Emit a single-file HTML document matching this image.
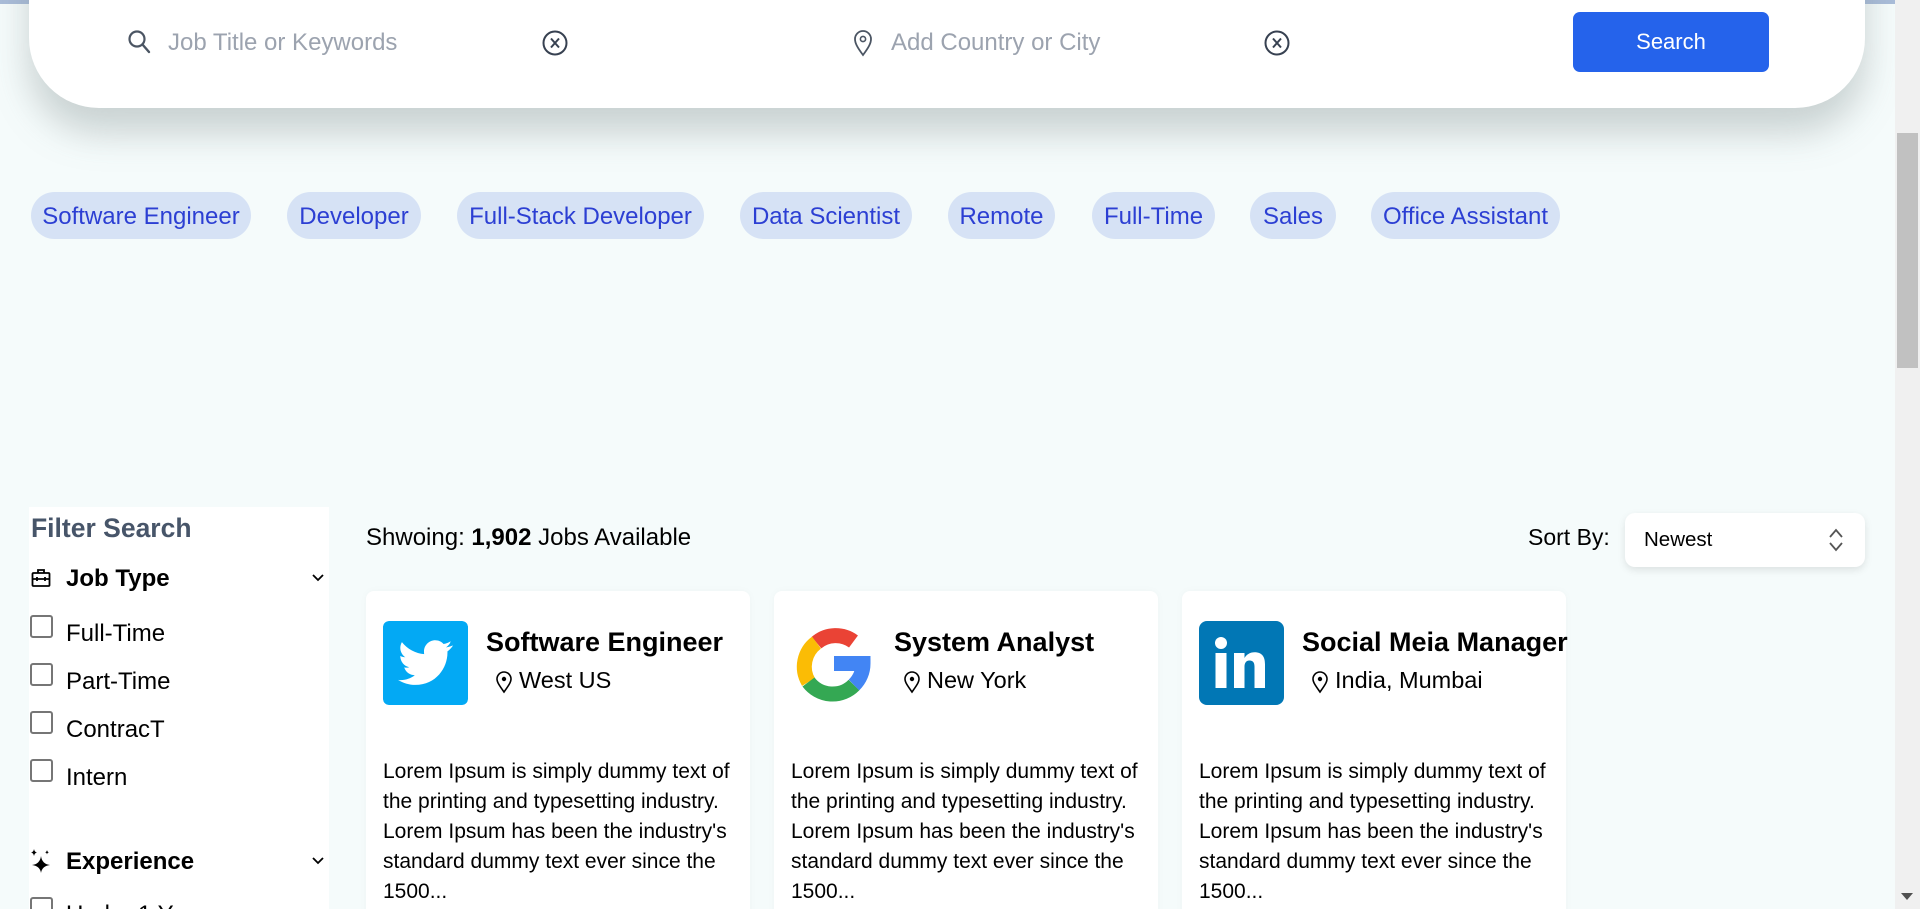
<!DOCTYPE html>
<html><head><meta charset="utf-8">
<style>
*{box-sizing:border-box;margin:0;padding:0}
html,body{width:1920px;height:909px;overflow:hidden}
body{background:#f5fbfb;font-family:"Liberation Sans",sans-serif;position:relative}
.abs{position:absolute}
.topline{left:0;top:0;width:1895px;height:4px;background:#a9bcd9}
.bar{left:29px;top:-60px;width:1836px;height:168px;background:#fff;border-radius:0 0 70px 70px;box-shadow:0 25px 35px rgba(120,135,135,.35)}
.ph{font-size:24px;color:#9ca3af;top:29px}
.btn{left:1573px;top:12px;width:196px;height:60px;background:#2563eb;border-radius:7px;color:#fff;font-size:22px;text-align:center;line-height:60px}
.chip{top:192px;height:47px;background:#d6e2f5;border-radius:24px;color:#2c3fd3;font-size:24px;line-height:49px;text-align:center;white-space:nowrap}
.sb{left:1895px;top:0;width:25px;height:909px;background:#f0f0f0}
.thumb{left:1897px;top:133px;width:21px;height:235px;background:#c1c1c1}
.side{left:29px;top:507px;width:300px;height:420px;background:#fff}
.fs{left:31px;top:513px;font-size:26.5px;font-weight:bold;color:#475569}
.h{font-size:24px;font-weight:bold;color:#000}
.cb{left:30px;width:23px;height:23px;border:2px solid #767676;border-radius:3px;background:#fff}
.ct{left:66px;font-size:24px;color:#000}
.card{top:591px;width:384px;height:340px;background:#fff;border-radius:8px;box-shadow:0 0 8px rgba(0,0,0,.03)}
.title{left:120px;top:36px;font-size:27px;font-weight:bold;color:#000;white-space:nowrap}
.loc{left:153px;top:76px;font-size:23.5px;color:#000;white-space:nowrap}
.pin{left:129px;top:79px}
.desc{left:17px;top:166px;width:365px;font-size:21px;line-height:30px;color:#000}
.logo{left:17px;top:30px;width:85px;height:84px;border-radius:6px}
</style></head><body>
<div class="abs topline"></div>
<div class="abs bar"></div>
<svg class="abs" style="left:127px;top:29px" width="24" height="26" viewBox="0 0 24 26"><circle cx="10" cy="10" r="7.5" fill="none" stroke="#4b5563" stroke-width="2.2"/><path d="M15.5 15.5L22 23" stroke="#4b5563" stroke-width="2.4" stroke-linecap="round"/></svg>
<div class="abs ph" style="left:168px">Job Title or Keywords</div>
<svg class="abs" style="left:541px;top:29px" width="28" height="28" viewBox="0 0 28 28"><circle cx="14" cy="14" r="11.5" fill="none" stroke="#374151" stroke-width="2"/><path d="M10 9.5L18 18.5M18 9.5L10 18.5" stroke="#374151" stroke-width="2"/></svg>
<svg class="abs" style="left:852px;top:29px" width="22" height="28" viewBox="0 0 22 28"><path d="M11 26C5 18 3 14 3 10a8 8 0 0 1 16 0c0 4-2 8-8 16z" fill="none" stroke="#4b5563" stroke-width="1.8"/><circle cx="11" cy="10" r="2.6" fill="none" stroke="#4b5563" stroke-width="1.6"/></svg>
<div class="abs ph" style="left:891px">Add Country or City</div>
<svg class="abs" style="left:1263px;top:29px" width="28" height="28" viewBox="0 0 28 28"><circle cx="14" cy="14" r="11.5" fill="none" stroke="#374151" stroke-width="2"/><path d="M10 9.5L18 18.5M18 9.5L10 18.5" stroke="#374151" stroke-width="2"/></svg>
<div class="abs btn">Search</div>

<div class="abs chip" style="left:31px;width:220px">Software Engineer</div>
<div class="abs chip" style="left:287px;width:134px">Developer</div>
<div class="abs chip" style="left:457px;width:247px">Full-Stack Developer</div>
<div class="abs chip" style="left:740px;width:172px">Data Scientist</div>
<div class="abs chip" style="left:948px;width:107px">Remote</div>
<div class="abs chip" style="left:1092px;width:123px">Full-Time</div>
<div class="abs chip" style="left:1250px;width:86px">Sales</div>
<div class="abs chip" style="left:1371px;width:189px">Office Assistant</div>

<div class="abs sb"></div>
<div class="abs thumb"></div>
<svg class="abs" style="left:1899px;top:891px" width="16" height="10"><path d="M2 2h12L8 9z" fill="#505050"/></svg>

<div class="abs side"></div>
<div class="abs fs">Filter Search</div>
<svg class="abs" style="left:31px;top:568px" width="20" height="20" viewBox="0 0 20 20" fill="none" stroke="#000" stroke-width="1.8"><rect x="1.5" y="5" width="17" height="13" rx="1"/><path d="M7 5V2h6v3M1.5 11h17M6 9v4M14 9v4"/></svg>
<div class="abs h" style="left:66px;top:565px">Job Type</div>
<svg class="abs" style="left:311px;top:572px" width="14" height="12"><path d="M2 3l5 5 5-5" fill="none" stroke="#000" stroke-width="1.8"/></svg>
<div class="abs cb" style="top:615px"></div><div class="abs ct" style="top:620px">Full-Time</div>
<div class="abs cb" style="top:663px"></div><div class="abs ct" style="top:668px">Part-Time</div>
<div class="abs cb" style="top:711px"></div><div class="abs ct" style="top:716px">ContracT</div>
<div class="abs cb" style="top:759px"></div><div class="abs ct" style="top:764px">Intern</div>
<svg class="abs" style="left:30px;top:849px" width="22" height="24" viewBox="0 0 22 24"><path d="M11 7Q12 15 20 16Q12 17 11 24Q10 17 2 16Q10 15 11 7z" fill="#000"/><path d="M4 0Q4.5 3 7 3.5Q4.5 4 4 7Q3.5 4 1 3.5Q3.5 3 4 0z" fill="#000"/><path d="M17 1Q17.3 3 19 3.3Q17.3 3.6 17 5.5Q16.7 3.6 15 3.3Q16.7 3 17 1z" fill="#000"/></svg>
<div class="abs h" style="left:66px;top:848px">Experience</div>
<svg class="abs" style="left:311px;top:855px" width="14" height="12"><path d="M2 3l5 5 5-5" fill="none" stroke="#000" stroke-width="1.8"/></svg>
<div class="abs cb" style="top:897px"></div><div class="abs ct" style="top:901px">Under 1 Year</div>

<div class="abs" style="left:366px;top:524px;font-size:24px;color:#000">Shwoing: <b>1,902</b> Jobs Available</div>
<div class="abs" style="left:1528px;top:524px;font-size:23px;color:#000">Sort By:</div>
<div class="abs" style="left:1625px;top:513px;width:240px;height:54px;background:#fff;border-radius:10px;box-shadow:0 3px 8px rgba(0,0,0,.1)"></div>
<div class="abs" style="left:1644px;top:528px;font-size:20.5px;color:#000">Newest</div>
<svg class="abs" style="left:1827px;top:527px" width="18" height="26" viewBox="0 0 18 26"><path d="M3 10l6-7 6 7M3 16l6 7 6-7" fill="none" stroke="#555" stroke-width="1.8"/></svg>

<div class="abs card" style="left:366px">
 <svg class="abs logo" viewBox="0 0 85 84"><rect width="85" height="84" rx="6" fill="#03a9f4"/><g transform="translate(15,14) scale(2.3)"><path fill="#fff" d="M23.6 4.6c-.9.4-1.8.6-2.8.8 1-.6 1.8-1.6 2.1-2.7-.9.6-2 1-3.1 1.2-.9-1-2.2-1.6-3.6-1.6-2.7 0-4.9 2.2-4.9 4.9 0 .4 0 .8.1 1.1C7.7 8.1 4.1 6.1 1.7 3.1c-.4.7-.7 1.6-.7 2.5 0 1.7.9 3.2 2.2 4.1-.8 0-1.6-.2-2.2-.6v.1c0 2.4 1.7 4.4 3.9 4.8-.4.1-.8.2-1.3.2-.3 0-.6 0-.9-.1.6 2 2.4 3.4 4.6 3.4-1.7 1.3-3.8 2.1-6.1 2.1-.4 0-.8 0-1.2-.1 2.2 1.4 4.8 2.2 7.5 2.2 9.1 0 14-7.5 14-14v-.6c1-.7 1.8-1.6 2.4-2.5z"/></g></svg>
 <div class="abs title">Software Engineer</div>
 <svg class="abs pin" width="18" height="24" viewBox="0 0 18 24"><path d="M9 22C4 15 2 12 2 9a7 7 0 0 1 14 0c0 3-2 6-7 13z" fill="none" stroke="#000" stroke-width="1.6"/><circle cx="9" cy="9" r="2.2" fill="#000"/></svg>
 <div class="abs loc">West US</div>
 <div class="abs desc">Lorem Ipsum is simply dummy text of the printing and typesetting industry. Lorem Ipsum has been the industry's standard dummy text ever since the 1500...</div>
</div>
<div class="abs card" style="left:774px">
 <svg class="abs logo" viewBox="0 0 85 84"><g fill="none" stroke-width="15"><path d="M25.5 21.6A30 30 0 0 1 62.5 20.5" stroke="#ea4335"/><path d="M25.5 21.6A30 30 0 0 0 17.5 61" stroke="#fbbc05"/><path d="M17.5 61A30 30 0 0 0 63 64" stroke="#34a853"/><path d="M63 64A30 30 0 0 0 72 42.5H43" stroke="#4285f4"/></g></svg>
 <div class="abs title">System Analyst</div>
 <svg class="abs pin" width="18" height="24" viewBox="0 0 18 24"><path d="M9 22C4 15 2 12 2 9a7 7 0 0 1 14 0c0 3-2 6-7 13z" fill="none" stroke="#000" stroke-width="1.6"/><circle cx="9" cy="9" r="2.2" fill="#000"/></svg>
 <div class="abs loc">New York</div>
 <div class="abs desc">Lorem Ipsum is simply dummy text of the printing and typesetting industry. Lorem Ipsum has been the industry's standard dummy text ever since the 1500...</div>
</div>
<div class="abs card" style="left:1182px">
 <svg class="abs logo" viewBox="0 0 85 84"><rect width="85" height="84" rx="8" fill="#0177b5"/><circle cx="22" cy="22" r="6" fill="#fff"/><rect x="16.5" y="32" width="11" height="35" fill="#fff"/><path d="M35 32h10.5v5c2-3.5 5.5-5.8 10-5.8 8 0 10.5 5 10.5 12V67H55.5V46c0-4-1.2-6.5-5-6.5s-5 3-5 6.5V67H35z" fill="#fff"/></svg>
 <div class="abs title">Social Meia Manager</div>
 <svg class="abs pin" width="18" height="24" viewBox="0 0 18 24"><path d="M9 22C4 15 2 12 2 9a7 7 0 0 1 14 0c0 3-2 6-7 13z" fill="none" stroke="#000" stroke-width="1.6"/><circle cx="9" cy="9" r="2.2" fill="#000"/></svg>
 <div class="abs loc">India, Mumbai</div>
 <div class="abs desc">Lorem Ipsum is simply dummy text of the printing and typesetting industry. Lorem Ipsum has been the industry's standard dummy text ever since the 1500...</div>
</div>
</body></html>
